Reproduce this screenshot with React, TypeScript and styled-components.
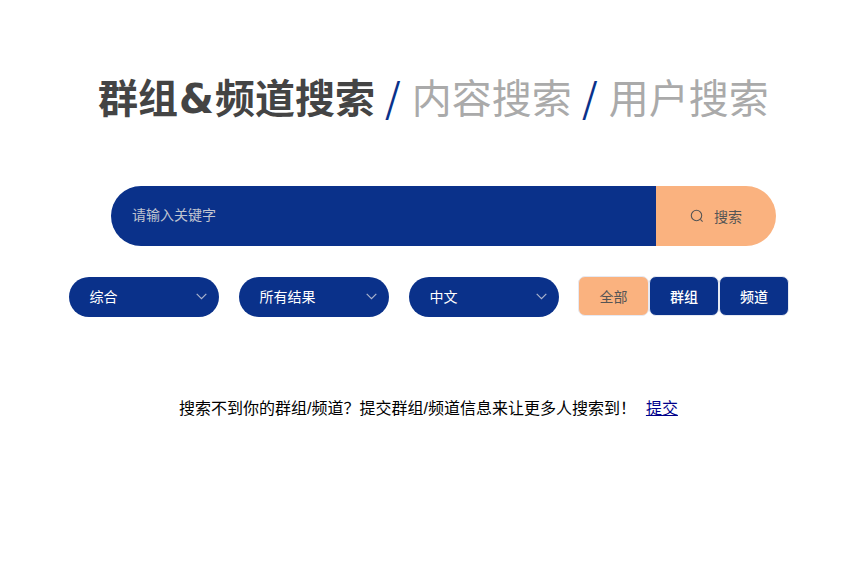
import React from 'react';
import styled, { createGlobalStyle } from 'styled-components';

const navy = '#0a318a';
const peach = '#fab27f';

const GlobalStyle = createGlobalStyle`
  html, body {
    margin: 0;
    padding: 0;
    background: #fff;
    font-family: "Liberation Sans", "Noto Sans CJK SC", sans-serif;
  }
`;

const Page = styled.div`
  width: 850px;
  height: 562px;
  overflow: hidden;
  display: flex;
  flex-direction: column;
  align-items: flex-start;
  padding-top: 68px;
  box-sizing: border-box;
`;

const Title = styled.h1`
  margin: 0 0 0 98px;
  height: 56px;
  line-height: 56px;
  font-size: 40px;
  font-weight: 400;
  color: #aaa;
  white-space: nowrap;
`;

const Active = styled.span`
  font-weight: 700;
  color: #444;
`;

const Amp = styled.span`
  font-family: "DejaVu Sans", sans-serif;
  margin: 0 1px;
`;

const Slash = styled.span`
  font-family: "Noto Sans CJK SC", sans-serif;
  margin-left: -1px;
  color: ${navy};
`;

const SearchBar = styled.div`
  display: flex;
  width: 665px;
  height: 60px;
  margin: 62px 0 0 111px;
  border-radius: 30px;
  overflow: hidden;
`;

const SearchInput = styled.input`
  flex: 1;
  min-width: 0;
  border: 0;
  outline: 0;
  padding: 0 21px 2px;
  background: ${navy};
  color: #fff;
  font: inherit;
  font-size: 14px;

  &::placeholder {
    color: #c0c4d0;
    opacity: 1;
  }
`;

const SearchButton = styled.button`
  width: 120px;
  border: 0;
  background: ${peach};
  color: #555;
  font: inherit;
  font-size: 14px;
  display: flex;
  align-items: center;
  justify-content: center;
  gap: 10px;
  padding: 0 0 1px;
`;

const Filters = styled.div`
  display: flex;
  align-items: flex-start;
  margin: 31px 0 0 69px;
`;

const Dropdown = styled.div`
  width: 150px;
  height: 40px;
  margin-right: 20px;
  padding: 0 12px 2px 20.5px;
  box-sizing: border-box;
  border-radius: 20px;
  background: ${navy};
  color: #fff;
  font-size: 14px;
  display: flex;
  align-items: center;
  justify-content: space-between;
`;

const Tabs = styled.div`
  display: flex;
  margin: -1px 0 0 -1px;
`;

const Tab = styled.button<{ $active?: boolean }>`
  width: ${(props) => (props.$active ? 71 : 70)}px;
  height: 40px;
  padding: 0 0 1px;
  box-sizing: border-box;
  border: 1px solid #e6e9f2;
  border-radius: 7px;
  background: ${(props) => (props.$active ? peach : navy)};
  color: ${(props) => (props.$active ? '#555' : '#fff')};
  font: inherit;
  font-size: 14px;
  font-weight: ${(props) => (props.$active ? 400 : 500)};
`;

const Notice = styled.p`
  margin: 72px 0 0 179px;
  font-size: 16px;
  line-height: 40px;
  color: #000;
  white-space: nowrap;
`;

const Link = styled.a`
  margin-left: 10px;
  color: #00008b;
  text-decoration: underline;
`;

const SearchIcon = () => (
  <svg width="14" height="14" viewBox="0 0 14 14" fill="none" stroke="#555" strokeWidth="1.1">
    <circle cx="6.5" cy="6.5" r="5.2" />
    <path d="M10.4 10.4 12.6 12.6" />
  </svg>
);

const Chevron = () => (
  <svg width="11" height="7" viewBox="0 0 11 7" fill="none" stroke="#aab3cc" strokeWidth="1.2">
    <path d="M.7.8 5.5 5.6 10.3.8" />
  </svg>
);

export default function App() {
  return (
    <>
      <GlobalStyle />
      <Page>
        <Title>
          <Active>群组<Amp>&amp;</Amp>频道搜索</Active> <Slash>/</Slash> 内容搜索 <Slash>/</Slash> 用户搜索
        </Title>
        <SearchBar>
          <SearchInput placeholder="请输入关键字" />
          <SearchButton>
            <SearchIcon />
            搜索
          </SearchButton>
        </SearchBar>
        <Filters>
          {['综合', '所有结果', '中文'].map((label) => (
            <Dropdown key={label}>
              {label}
              <Chevron />
            </Dropdown>
          ))}
          <Tabs>
            <Tab $active>全部</Tab>
            <Tab>群组</Tab>
            <Tab>频道</Tab>
          </Tabs>
        </Filters>
        <Notice>
          搜索不到你的群组/频道？提交群组/频道信息来让更多人搜索到！<Link href="#">提交</Link>
        </Notice>
      </Page>
    </>
  );
}
